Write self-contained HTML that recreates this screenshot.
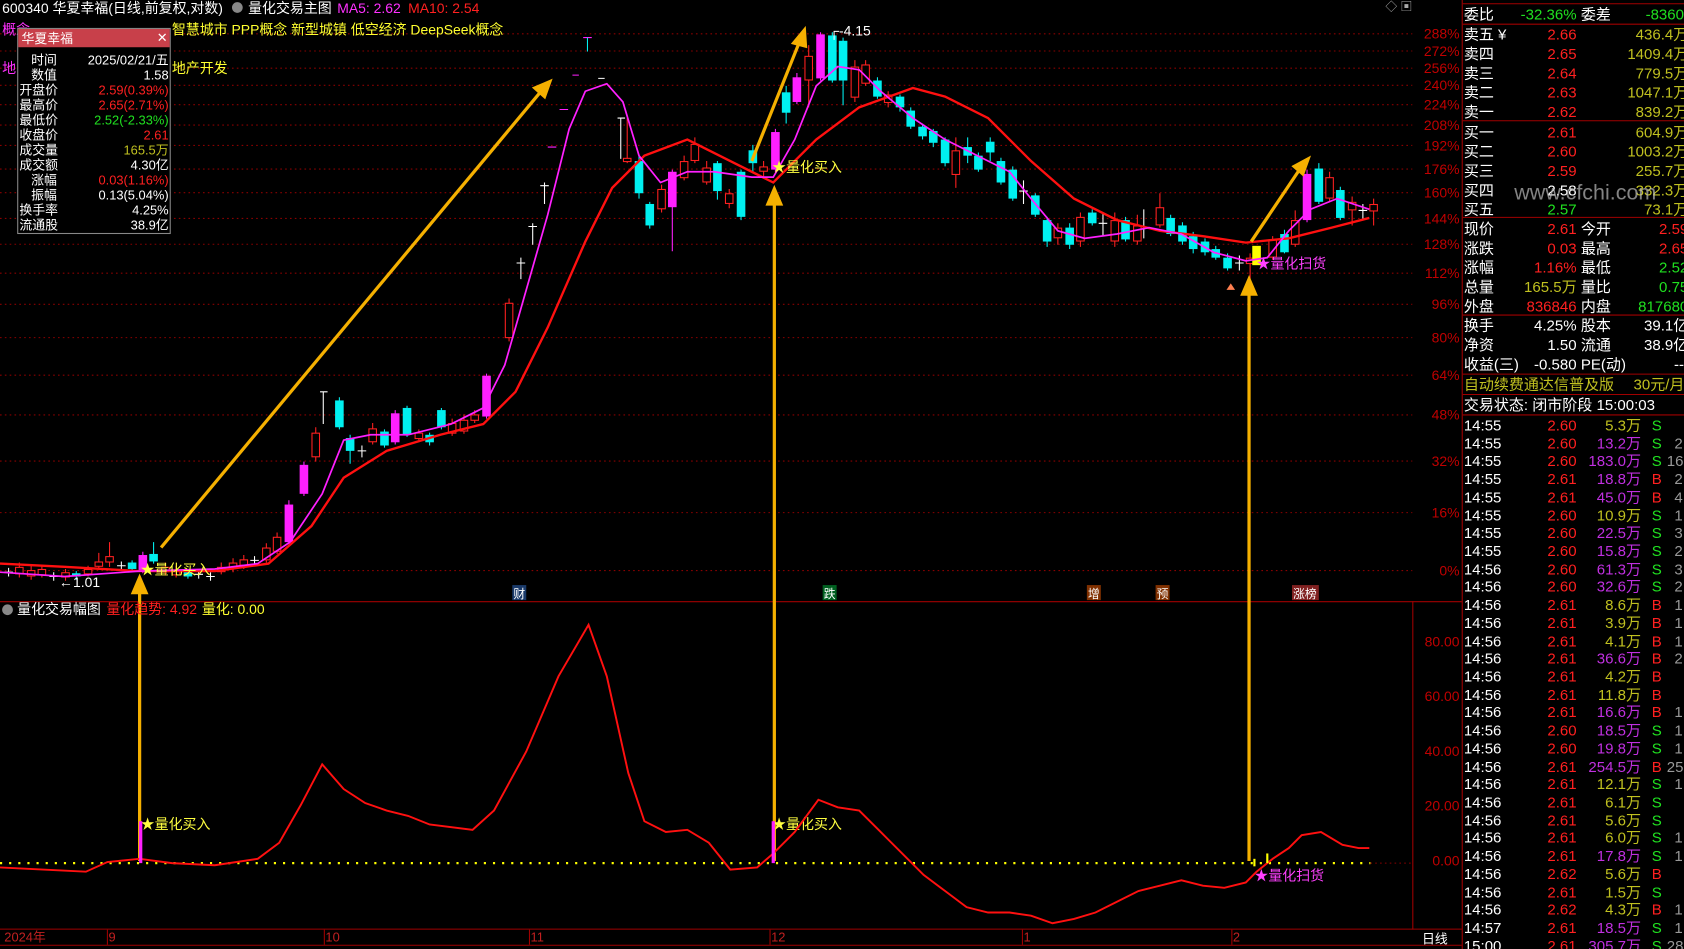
<!DOCTYPE html>
<html><head><meta charset="utf-8"><style>
html,body{margin:0;padding:0;background:#000;overflow:hidden;width:1684px;height:949px}
svg{display:block}
text{font-family:"Liberation Sans","Noto Sans CJK SC",sans-serif}
.u{fill:#000;stroke:#ff2020;stroke-width:1}
.d{fill:#00f0f0}
.m{fill:#ff20ff}
.y{fill:#ffff00}
</style></head><body>
<svg width="1684" height="949" viewBox="0 0 1568 884" preserveAspectRatio="none" xmlns="http://www.w3.org/2000/svg">
<rect width="1568" height="884" fill="#000"/>
<g stroke="#8a0000" stroke-dasharray="1.5 3" stroke-width="1">
<line x1="0" y1="31.5" x2="1315" y2="31.5"/><line x1="0" y1="47.5" x2="1315" y2="47.5"/><line x1="0" y1="63.5" x2="1315" y2="63.5"/><line x1="0" y1="79.5" x2="1315" y2="79.5"/><line x1="0" y1="97.5" x2="1315" y2="97.5"/><line x1="0" y1="116.5" x2="1315" y2="116.5"/><line x1="0" y1="135.5" x2="1315" y2="135.5"/><line x1="0" y1="157.5" x2="1315" y2="157.5"/><line x1="0" y1="179.5" x2="1315" y2="179.5"/><line x1="0" y1="203.5" x2="1315" y2="203.5"/><line x1="0" y1="227.5" x2="1315" y2="227.5"/><line x1="0" y1="254.5" x2="1315" y2="254.5"/><line x1="0" y1="283.5" x2="1315" y2="283.5"/><line x1="0" y1="314.5" x2="1315" y2="314.5"/><line x1="0" y1="349.5" x2="1315" y2="349.5"/><line x1="0" y1="386.5" x2="1315" y2="386.5"/><line x1="0" y1="429.5" x2="1315" y2="429.5"/><line x1="0" y1="477.5" x2="1315" y2="477.5"/><line x1="0" y1="531.5" x2="1315" y2="531.5"/>
</g>
<g font-size="13" fill="#c00000" text-anchor="end">
<text x="1359" y="36">288%</text><text x="1359" y="52">272%</text><text x="1359" y="68">256%</text><text x="1359" y="84">240%</text><text x="1359" y="102">224%</text><text x="1359" y="121">208%</text><text x="1359" y="140">192%</text><text x="1359" y="162">176%</text><text x="1359" y="184">160%</text><text x="1359" y="208">144%</text><text x="1359" y="232">128%</text><text x="1359" y="259">112%</text><text x="1359" y="288">96%</text><text x="1359" y="319">80%</text><text x="1359" y="354">64%</text><text x="1359" y="391">48%</text><text x="1359" y="434">32%</text><text x="1359" y="482">16%</text><text x="1359" y="536">0%</text>
<text x="1359" y="602">80.00</text><text x="1359" y="653">60.00</text><text x="1359" y="704">40.00</text><text x="1359" y="755">20.00</text><text x="1359" y="806">0.00</text>
</g>
<line x1="0" y1="560.5" x2="1361" y2="560.5" stroke="#a00000"/>
<line x1="1361.5" y1="0" x2="1361.5" y2="884" stroke="#a00000"/>
<line x1="1315.5" y1="560" x2="1315.5" y2="866" stroke="#a00000"/>
<line x1="0" y1="865.5" x2="1361" y2="865.5" stroke="#a00000"/>
<line x1="0" y1="880.5" x2="1361" y2="880.5" stroke="#a00000"/>
<!-- wicks -->
<path fill="none" stroke="#ff2020" d="M18,524V538M29,527V540M39,526V538M61,530V541M82,527V537M92,515V530M102,505V528M154,524V536M164,527V538M206,524V535M217,520V533M227,517V530M248,506V524M258,496V516M294,398V430M347,394V414M390,400V410M421,390V406M432,386V404M442,382V394M474,278V318M584,110V152M616,172V198M637,145V168M647,128V152M658,150V172M679,176V194M711,150V165M753,42V100M796,56V95M806,56V80M827,85V100M890,128V175M985,208V228M1006,198V230M1038,198V230M1059,200V228M1080,180V212M1164,236V260M1185,220V242M1206,196V230M1238,160V188M1259,183V210M1279,185V210"/>
<path fill="none" stroke="#00f0f0" d="M71,532V540M123,522V532M143,505V525M175,531V539M316,370V400M326,405V432M358,400V417M379,378V407M400,403V415M411,380V400M595,145V185M605,188V213M668,150V186M690,158V205M701,135V160M732,80V115M775,30V77M785,35V98M817,72V92M838,88V104M848,100V120M859,115V130M869,120V137M880,128V155M901,128V152M911,142V160M922,128V150M932,147V172M943,155V187M964,180V202M975,202V230M996,208V232M1017,195V210M1048,202V225M1090,200V220M1101,207V228M1111,216V236M1122,222V238M1132,229V242M1143,236V252M1196,214V236M1228,152V190M1248,174V205"/>
<path fill="none" stroke="#ff20ff" d="M133,514V534M269,466V507M283,430V462M368,382V414M453,348V390M626,158V234M722,120V160M742,68V97M764,30V75M1217,158V207"/>
<path fill="none" stroke="#fff" d="M4,533H12M8,529V537M46,537H54M50,533V541M109,527H117M113,523V531M181,535H189M185,531V539M192,537H200M196,533V541M233,522H241M237,518V526M301,365V395M298,365H305M333,420H341M337,415V426M485,240V260M481,245H489M496,208V228M492,211H500M507,170V190M503,173H511M557,73H563M578,110V148M575,110H582M949,178H957M953,168V190M1023,208H1031M1027,198V220M1065,195V222M1150,245H1158M1154,238V252M1265,196H1273M1269,190V205"/>
<path fill="none" stroke="#ff20ff" d="M510,137H518M521,102H529M533,70H539M543,35H551"/>
<line x1="547" y1="35" x2="547" y2="48" stroke="#00f0f0"/>
<!-- bodies -->
<rect class="u" x="14.5" y="528.5" width="7" height="6"/><rect class="u" x="25.5" y="531.5" width="7" height="5"/><rect class="u" x="35.5" y="530.5" width="7" height="5"/><rect class="u" x="57.5" y="533.5" width="7" height="4"/><rect class="u" x="78.5" y="530.5" width="7" height="4"/><rect class="u" x="88.5" y="523.5" width="7" height="4"/><rect class="u" x="98.5" y="518.5" width="7" height="5"/><rect class="u" x="150.5" y="528.5" width="7" height="4"/><rect class="u" x="160.5" y="531.5" width="7" height="4"/><rect class="u" x="202.5" y="528.5" width="7" height="4"/><rect class="u" x="213.5" y="524.5" width="7" height="5"/><rect class="u" x="223.5" y="521.5" width="7" height="5"/><rect class="u" x="244.5" y="510.5" width="7" height="11"/><rect class="u" x="254.5" y="500.5" width="7" height="13"/><rect class="u" x="290.5" y="403.5" width="7" height="22"/><rect class="u" x="343.5" y="399.5" width="7" height="12"/><rect class="u" x="386.5" y="403.5" width="7" height="5"/><rect class="u" x="417.5" y="394.5" width="7" height="9"/><rect class="u" x="428.5" y="391.5" width="7" height="10"/><rect class="u" x="438.5" y="386.5" width="7" height="5"/><rect class="u" x="470.5" y="282.5" width="7" height="32"/><rect class="u" x="580.5" y="147.5" width="7" height="3"/><rect class="u" x="612.5" y="176.5" width="7" height="18"/><rect class="u" x="633.5" y="150.5" width="7" height="15"/><rect class="u" x="643.5" y="134.5" width="7" height="15"/><rect class="u" x="654.5" y="156.5" width="7" height="13"/><rect class="u" x="675.5" y="180.5" width="7" height="9"/><rect class="u" x="707.5" y="155.5" width="7" height="4"/><rect class="u" x="749.5" y="52.5" width="7" height="22"/><rect class="u" x="792.5" y="62.5" width="7" height="28"/><rect class="u" x="802.5" y="60.5" width="7" height="17"/><rect class="u" x="823.5" y="88.5" width="7" height="7"/><rect class="u" x="886.5" y="140.5" width="7" height="22"/><rect class="u" x="981.5" y="212.5" width="7" height="9"/><rect class="u" x="1002.5" y="202.5" width="7" height="22"/><rect class="u" x="1034.5" y="205.5" width="7" height="19"/><rect class="u" x="1055.5" y="210.5" width="7" height="14"/><rect class="u" x="1076.5" y="193.5" width="7" height="16"/><rect class="u" x="1160.5" y="240.5" width="7" height="5"/><rect class="u" x="1181.5" y="223.5" width="7" height="16"/><rect class="u" x="1202.5" y="205.5" width="7" height="22"/><rect class="u" x="1234.5" y="165.5" width="7" height="19"/><rect class="u" x="1255.5" y="188.5" width="7" height="7"/><rect class="u" x="1275.5" y="190.5" width="7" height="6"/>
<rect class="d" x="67" y="534" width="8" height="3"/><rect class="d" x="119" y="524" width="8" height="6"/><rect class="d" x="139" y="516" width="8" height="7"/><rect class="d" x="171" y="533" width="8" height="4"/><rect class="d" x="312" y="373" width="8" height="25"/><rect class="d" x="322" y="408" width="8" height="12"/><rect class="d" x="354" y="402" width="8" height="13"/><rect class="d" x="375" y="380" width="8" height="25"/><rect class="d" x="396" y="405" width="8" height="7"/><rect class="d" x="407" y="382" width="8" height="16"/><rect class="d" x="591" y="150" width="8" height="30"/><rect class="d" x="601" y="190" width="8" height="20"/><rect class="d" x="664" y="152" width="8" height="26"/><rect class="d" x="686" y="160" width="8" height="42"/><rect class="d" x="697" y="140" width="8" height="12"/><rect class="d" x="728" y="86" width="8" height="19"/><rect class="d" x="771" y="33" width="8" height="42"/><rect class="d" x="781" y="38" width="8" height="37"/><rect class="d" x="813" y="75" width="8" height="15"/><rect class="d" x="834" y="90" width="8" height="10"/><rect class="d" x="844" y="103" width="8" height="15"/><rect class="d" x="855" y="118" width="8" height="9"/><rect class="d" x="865" y="122" width="8" height="11"/><rect class="d" x="876" y="130" width="8" height="22"/><rect class="d" x="897" y="137" width="8" height="8"/><rect class="d" x="907" y="145" width="8" height="13"/><rect class="d" x="918" y="132" width="8" height="10"/><rect class="d" x="928" y="150" width="8" height="20"/><rect class="d" x="939" y="158" width="8" height="27"/><rect class="d" x="960" y="182" width="8" height="18"/><rect class="d" x="971" y="205" width="8" height="20"/><rect class="d" x="992" y="212" width="8" height="16"/><rect class="d" x="1013" y="198" width="8" height="10"/><rect class="d" x="1044" y="205" width="8" height="18"/><rect class="d" x="1086" y="203" width="8" height="15"/><rect class="d" x="1097" y="210" width="8" height="15"/><rect class="d" x="1107" y="220" width="8" height="12"/><rect class="d" x="1118" y="225" width="8" height="10"/><rect class="d" x="1128" y="232" width="8" height="8"/><rect class="d" x="1139" y="240" width="8" height="10"/><rect class="d" x="1192" y="218" width="8" height="17"/><rect class="d" x="1224" y="157" width="8" height="31"/><rect class="d" x="1244" y="177" width="8" height="26"/>
<rect class="m" x="129" y="517" width="8" height="15"/><rect class="m" x="265" y="470" width="8" height="35"/><rect class="m" x="279" y="433" width="8" height="27"/><rect class="m" x="364" y="385" width="8" height="27"/><rect class="m" x="449" y="350" width="8" height="38"/><rect class="m" x="622" y="160" width="8" height="33"/><rect class="m" x="718" y="123" width="8" height="35"/><rect class="m" x="738" y="72" width="8" height="23"/><rect class="m" x="760" y="32" width="8" height="41"/><rect class="m" x="1213" y="162" width="8" height="43"/>
<rect class="y" x="1166" y="229" width="8" height="18"/>
<!-- MAs -->
<polyline fill="none" stroke="#ff1010" stroke-width="2.2" points="0,525 60,528 130,532 200,532 250,525 290,490 320,445 360,420 410,405 450,395 480,365 510,305 545,225 570,175 600,145 640,130 680,150 720,170 760,130 800,100 850,82 880,90 920,110 960,150 1000,185 1040,205 1080,215 1120,220 1160,226 1200,222 1240,212 1275,203"/>
<polyline fill="none" stroke="#ff20ff" stroke-width="1.6" points="0,533 60,537 130,532 200,530 240,525 270,505 300,460 320,410 345,405 380,405 420,395 450,380 470,340 490,270 510,200 530,120 545,85 565,78 580,95 595,145 615,170 640,160 665,160 700,165 720,165 740,130 760,80 780,62 800,65 820,85 850,110 880,130 910,145 940,160 960,185 985,215 1010,222 1040,218 1070,212 1100,218 1130,235 1160,243 1180,240 1200,215 1220,195 1245,185 1275,195"/>
<g stroke="#f5b000" stroke-width="3" fill="#f5b000">
<line x1="150" y1="510" x2="503" y2="86"/><polygon points="512,76 498,82 507,90"/>
<line x1="700" y1="150" x2="744" y2="40"/><polygon points="749,28 739,40 750,43"/>
<line x1="1165" y1="225" x2="1210" y2="158"/><polygon points="1218,148 1205,155 1213,162"/>
<line x1="130" y1="802" x2="130" y2="550"/><polygon points="130,538 124,552 136,552"/>
<line x1="721" y1="802" x2="721" y2="188"/><polygon points="721,176 715,190 727,190"/>
<line x1="1163" y1="802" x2="1163" y2="272"/><polygon points="1163,260 1157,274 1169,274"/>
</g>
<polygon points="1142,270 1150,270 1146,264" fill="#ff8050"/>
<g font-size="13">
<text x="131" y="535" fill="#ffff40">★量化买入</text>
<text x="719" y="160" fill="#ffff40">★量化买入</text>
<text x="1170" y="250" fill="#ff40ff">★量化扫货</text>
<text x="131" y="772" fill="#ffff40">★量化买入</text>
<text x="719" y="772" fill="#ffff40">★量化买入</text>
<text x="1168" y="820" fill="#ff40ff">★量化扫货</text>
<text x="772" y="33" fill="#fff">┌-4.15</text>
<text x="55" y="547" fill="#fff">←1.01</text>
</g>
<g font-size="11">
<rect x="477" y="545" width="13" height="14" fill="#1a3a6a"/><text x="478" y="557" fill="#fff">财</text>
<rect x="766" y="545" width="13" height="14" fill="#006020"/><text x="767" y="557" fill="#fff">跌</text>
<rect x="1012" y="545" width="13" height="14" fill="#803000"/><text x="1013" y="557" fill="#fff">增</text>
<rect x="1076" y="545" width="13" height="14" fill="#803000"/><text x="1077" y="557" fill="#fff">预</text>
<rect x="1203" y="545" width="25" height="14" fill="#802020"/><text x="1204" y="557" fill="#fff">涨榜</text>
</g>
<line x1="0" y1="804" x2="1276" y2="804" stroke="#ffff00" stroke-width="2" stroke-dasharray="2 6.5"/>
<line x1="1276" y1="804" x2="1315" y2="804" stroke="#8a0000" stroke-dasharray="1.5 3"/>
<polyline fill="none" stroke="#ff1010" stroke-width="1.8" points="0,808 40,810 80,812 100,803 130,800 160,804 200,806 240,800 260,785 280,750 300,712 320,735 340,748 360,755 380,760 400,768 440,773 460,755 490,700 520,630 548,582 565,630 585,720 600,765 620,775 640,773 660,785 680,810 705,808 720,795 740,775 762,745 780,752 800,755 820,775 840,795 860,815 880,830 900,845 920,850 940,850 960,853 980,860 1000,856 1020,850 1040,840 1060,830 1080,825 1100,820 1120,825 1140,827 1160,822 1170,812 1185,800 1200,790 1212,778 1230,775 1250,787 1265,790 1275,790"/>
<rect x="129.5" y="765" width="3" height="39" fill="#ff20ff"/>
<rect x="718.5" y="765" width="3" height="39" fill="#ff20ff"/>
<rect x="1167" y="800" width="2" height="7" fill="#ffff00"/><rect x="1179" y="795" width="2" height="9" fill="#ffff00"/>
<g font-size="13">
<text x="2" y="12" fill="#fff">600340 华夏幸福(日线,前复权,对数)</text>
<circle cx="221" cy="7" r="5" fill="#888"/><text x="231" y="12" fill="#fff">量化交易主图</text>
<text x="314" y="12" fill="#ff30ff">MA5: 2.62</text><text x="380" y="12" fill="#ff2020">MA10: 2.54</text>
<text x="2" y="32" fill="#ff30ff">概念</text><text x="160" y="32" fill="#ffff30">智慧城市 PPP概念 新型城镇 低空经济 DeepSeek概念</text>
<text x="2" y="68" fill="#ff30ff">地</text><text x="160" y="68" fill="#ffff30">地产开发</text>
<circle cx="7" cy="568" r="5" fill="#888"/><text x="16" y="572" fill="#fff">量化交易幅图</text>
<text x="99" y="572" fill="#ff2020">量化趋势: 4.92</text><text x="188" y="572" fill="#ffff30">量化: 0.00</text>
<text x="1290" y="10" fill="#aaa" font-size="11">◇ ▣</text>
</g>
<rect x="16.5" y="26.5" width="142" height="191" fill="#000" stroke="#888"/>
<rect x="17" y="27" width="141" height="17" fill="#c8404a"/>
<g font-size="12">
<text x="20" y="40" fill="#fff">华夏幸福</text><text x="146" y="39" fill="#fff">✕</text>
<g fill="#fff"><text x="29" y="60">时间</text><text x="29" y="74">数值</text><text x="18" y="88">开盘价</text><text x="18" y="102">最高价</text><text x="18" y="116">最低价</text><text x="18" y="130">收盘价</text><text x="18" y="144">成交量</text><text x="18" y="158">成交额</text><text x="29" y="172">涨幅</text><text x="29" y="186">振幅</text><text x="18" y="200">换手率</text><text x="18" y="214">流通股</text></g>
<g text-anchor="end"><text x="157" y="60" fill="#fff">2025/02/21/五</text><text x="157" y="74" fill="#fff">1.58</text><text x="157" y="88" fill="#ff2020">2.59(0.39%)</text><text x="157" y="102" fill="#ff2020">2.65(2.71%)</text><text x="157" y="116" fill="#20e020">2.52(-2.33%)</text><text x="157" y="130" fill="#ff2020">2.61</text><text x="157" y="144" fill="#c0c020">165.5万</text><text x="157" y="158" fill="#fff">4.30亿</text><text x="157" y="172" fill="#ff2020">0.03(1.16%)</text><text x="157" y="186" fill="#fff">0.13(5.04%)</text><text x="157" y="200" fill="#fff">4.25%</text><text x="157" y="214" fill="#fff">38.9亿</text></g>
</g>
<g font-size="12" fill="#c02020"><text x="4" y="877">2024年</text><text x="101" y="877">9</text><text x="303" y="877">10</text><text x="494" y="877">11</text><text x="718" y="877">12</text><text x="953" y="877">1</text><text x="1148" y="877">2</text></g>
<g stroke="#a00000"><line x1="100" y1="866" x2="100" y2="880"/><line x1="302" y1="866" x2="302" y2="880"/><line x1="493" y1="866" x2="493" y2="880"/><line x1="717" y1="866" x2="717" y2="880"/><line x1="952" y1="866" x2="952" y2="880"/><line x1="1147" y1="866" x2="1147" y2="880"/></g>
<text x="1324" y="879" font-size="12" fill="#fff">日线</text>
<g stroke="#a00000"><line x1="1362" y1="3.5" x2="1568" y2="3.5"/><line x1="1362" y1="22.5" x2="1568" y2="22.5"/><line x1="1362" y1="112.5" x2="1568" y2="112.5"/><line x1="1362" y1="202.5" x2="1568" y2="202.5"/><line x1="1362" y1="293.5" x2="1568" y2="293.5"/><line x1="1362" y1="348.5" x2="1568" y2="348.5"/><line x1="1362" y1="367.5" x2="1568" y2="367.5"/><line x1="1362" y1="386.5" x2="1568" y2="386.5"/></g>
<g font-size="14">
<text x="1363" y="18" fill="#fff">委比</text><text x="1468" y="18" fill="#20e020" text-anchor="end">-32.36%</text><text x="1472" y="18" fill="#fff">委差</text><text x="1568" y="18" fill="#20e020" text-anchor="end">-8360</text>
<g fill="#fff"><text x="1363" y="37">卖五 ¥</text><text x="1363" y="55">卖四</text><text x="1363" y="73">卖三</text><text x="1363" y="91">卖二</text><text x="1363" y="109">卖一</text><text x="1363" y="128">买一</text><text x="1363" y="146">买二</text><text x="1363" y="164">买三</text><text x="1363" y="182">买四</text><text x="1363" y="200">买五</text></g>
<g text-anchor="end"><g fill="#ff2020"><text x="1468" y="37">2.66</text><text x="1468" y="55">2.65</text><text x="1468" y="73">2.64</text><text x="1468" y="91">2.63</text><text x="1468" y="109">2.62</text><text x="1468" y="128">2.61</text><text x="1468" y="146">2.60</text><text x="1468" y="164">2.59</text></g><text x="1468" y="182" fill="#fff">2.58</text><text x="1468" y="200" fill="#20e020">2.57</text>
<g fill="#c0c020"><text x="1572" y="37">436.4万</text><text x="1572" y="55">1409.4万</text><text x="1572" y="73">779.5万</text><text x="1572" y="91">1047.1万</text><text x="1572" y="109">839.2万</text><text x="1572" y="128">604.9万</text><text x="1572" y="146">1003.2万</text><text x="1572" y="164">255.7万</text><text x="1572" y="182">332.3万</text><text x="1572" y="200">73.1万</text></g></g>
<text x="1410" y="186" fill="#bbb" fill-opacity="0.7" font-size="20">www.cfchi.com</text>
<g fill="#fff"><text x="1363" y="218">现价</text><text x="1363" y="236">涨跌</text><text x="1363" y="254">涨幅</text><text x="1363" y="272">总量</text><text x="1363" y="290">外盘</text><text x="1472" y="218">今开</text><text x="1472" y="236">最高</text><text x="1472" y="254">最低</text><text x="1472" y="272">量比</text><text x="1472" y="290">内盘</text>
<text x="1363" y="308">换手</text><text x="1363" y="326">净资</text><text x="1363" y="344">收益(三)</text><text x="1472" y="308">股本</text><text x="1472" y="326">流通</text><text x="1472" y="344">PE(动)</text></g>
<g text-anchor="end"><text x="1468" y="218" fill="#ff2020">2.61</text><text x="1468" y="236" fill="#ff2020">0.03</text><text x="1468" y="254" fill="#ff2020">1.16%</text><text x="1468" y="272" fill="#c0c020">165.5万</text><text x="1468" y="290" fill="#ff2020">836846</text>
<text x="1572" y="218" fill="#ff2020">2.59</text><text x="1572" y="236" fill="#ff2020">2.65</text><text x="1572" y="254" fill="#20e020">2.52</text><text x="1572" y="272" fill="#20e020">0.75</text><text x="1572" y="290" fill="#20e020">817680</text>
<text x="1468" y="308" fill="#fff">4.25%</text><text x="1468" y="326" fill="#fff">1.50</text><text x="1468" y="344" fill="#fff">-0.580</text><text x="1572" y="308" fill="#fff">39.1亿</text><text x="1572" y="326" fill="#fff">38.9亿</text><text x="1568" y="344" fill="#fff">--</text></g>
<text x="1363" y="363" fill="#c0c020">自动续费通达信普及版</text><text x="1521" y="363" fill="#c0c020">30元/月</text>
<text x="1363" y="382" fill="#fff">交易状态: 闭市阶段 15:00:03</text>
</g>
<g font-size="14">
<g fill="#fff"><text x="1363" y="401">14:55</text><text x="1363" y="418">14:55</text><text x="1363" y="434">14:55</text><text x="1363" y="451">14:55</text><text x="1363" y="468">14:55</text><text x="1363" y="485">14:55</text><text x="1363" y="501">14:55</text><text x="1363" y="518">14:55</text><text x="1363" y="535">14:56</text><text x="1363" y="551">14:56</text><text x="1363" y="568">14:56</text><text x="1363" y="585">14:56</text><text x="1363" y="602">14:56</text><text x="1363" y="618">14:56</text><text x="1363" y="635">14:56</text><text x="1363" y="652">14:56</text><text x="1363" y="668">14:56</text><text x="1363" y="685">14:56</text><text x="1363" y="702">14:56</text><text x="1363" y="719">14:56</text><text x="1363" y="735">14:56</text><text x="1363" y="752">14:56</text><text x="1363" y="769">14:56</text><text x="1363" y="785">14:56</text><text x="1363" y="802">14:56</text><text x="1363" y="819">14:56</text><text x="1363" y="836">14:56</text><text x="1363" y="852">14:56</text><text x="1363" y="869">14:57</text><text x="1363" y="886">15:00</text></g>
<g fill="#ff2020" text-anchor="end"><text x="1468" y="401">2.60</text><text x="1468" y="418">2.60</text><text x="1468" y="434">2.60</text><text x="1468" y="451">2.61</text><text x="1468" y="468">2.61</text><text x="1468" y="485">2.60</text><text x="1468" y="501">2.60</text><text x="1468" y="518">2.60</text><text x="1468" y="535">2.60</text><text x="1468" y="551">2.60</text><text x="1468" y="568">2.61</text><text x="1468" y="585">2.61</text><text x="1468" y="602">2.61</text><text x="1468" y="618">2.61</text><text x="1468" y="635">2.61</text><text x="1468" y="652">2.61</text><text x="1468" y="668">2.61</text><text x="1468" y="685">2.60</text><text x="1468" y="702">2.60</text><text x="1468" y="719">2.61</text><text x="1468" y="735">2.61</text><text x="1468" y="752">2.61</text><text x="1468" y="769">2.61</text><text x="1468" y="785">2.61</text><text x="1468" y="802">2.61</text><text x="1468" y="819">2.62</text><text x="1468" y="836">2.61</text><text x="1468" y="852">2.62</text><text x="1468" y="869">2.61</text><text x="1468" y="886">2.61</text></g>
<g text-anchor="end"><text x="1528" y="401" fill="#c0c020">5.3万</text><text x="1528" y="418" fill="#c030e0">13.2万</text><text x="1528" y="434" fill="#c030e0">183.0万</text><text x="1528" y="451" fill="#c030e0">18.8万</text><text x="1528" y="468" fill="#c030e0">45.0万</text><text x="1528" y="485" fill="#c0c020">10.9万</text><text x="1528" y="501" fill="#c030e0">22.5万</text><text x="1528" y="518" fill="#c030e0">15.8万</text><text x="1528" y="535" fill="#c030e0">61.3万</text><text x="1528" y="551" fill="#c030e0">32.6万</text><text x="1528" y="568" fill="#c0c020">8.6万</text><text x="1528" y="585" fill="#c0c020">3.9万</text><text x="1528" y="602" fill="#c0c020">4.1万</text><text x="1528" y="618" fill="#c030e0">36.6万</text><text x="1528" y="635" fill="#c0c020">4.2万</text><text x="1528" y="652" fill="#c0c020">11.8万</text><text x="1528" y="668" fill="#c030e0">16.6万</text><text x="1528" y="685" fill="#c030e0">18.5万</text><text x="1528" y="702" fill="#c030e0">19.8万</text><text x="1528" y="719" fill="#c030e0">254.5万</text><text x="1528" y="735" fill="#c0c020">12.1万</text><text x="1528" y="752" fill="#c0c020">6.1万</text><text x="1528" y="769" fill="#c0c020">5.6万</text><text x="1528" y="785" fill="#c0c020">6.0万</text><text x="1528" y="802" fill="#c030e0">17.8万</text><text x="1528" y="819" fill="#c0c020">5.6万</text><text x="1528" y="836" fill="#c0c020">1.5万</text><text x="1528" y="852" fill="#c0c020">4.3万</text><text x="1528" y="869" fill="#c030e0">18.5万</text><text x="1528" y="886" fill="#c030e0">305.7万</text></g>
<g fill="#20e020"><text x="1538" y="401">S</text><text x="1538" y="418">S</text><text x="1538" y="434">S</text><text x="1538" y="485">S</text><text x="1538" y="501">S</text><text x="1538" y="518">S</text><text x="1538" y="535">S</text><text x="1538" y="551">S</text><text x="1538" y="685">S</text><text x="1538" y="702">S</text><text x="1538" y="735">S</text><text x="1538" y="752">S</text><text x="1538" y="769">S</text><text x="1538" y="785">S</text><text x="1538" y="802">S</text><text x="1538" y="836">S</text><text x="1538" y="869">S</text><text x="1538" y="886">S</text></g>
<g fill="#ff2020"><text x="1538" y="451">B</text><text x="1538" y="468">B</text><text x="1538" y="568">B</text><text x="1538" y="585">B</text><text x="1538" y="602">B</text><text x="1538" y="618">B</text><text x="1538" y="635">B</text><text x="1538" y="652">B</text><text x="1538" y="668">B</text><text x="1538" y="719">B</text><text x="1538" y="819">B</text><text x="1538" y="852">B</text></g>
<g fill="#999"><text x="1559" y="418">2</text><text x="1552" y="434">16</text><text x="1559" y="451">2</text><text x="1559" y="468">4</text><text x="1559" y="485">1</text><text x="1559" y="501">3</text><text x="1559" y="518">2</text><text x="1559" y="535">3</text><text x="1559" y="551">2</text><text x="1559" y="568">1</text><text x="1559" y="585">1</text><text x="1559" y="602">1</text><text x="1559" y="618">2</text><text x="1559" y="668">1</text><text x="1559" y="685">1</text><text x="1559" y="702">1</text><text x="1552" y="719">25</text><text x="1559" y="735">1</text><text x="1559" y="785">1</text><text x="1559" y="802">1</text><text x="1559" y="852">1</text><text x="1559" y="869">1</text><text x="1552" y="886">28</text></g>
</g>
</svg>
</body></html>
